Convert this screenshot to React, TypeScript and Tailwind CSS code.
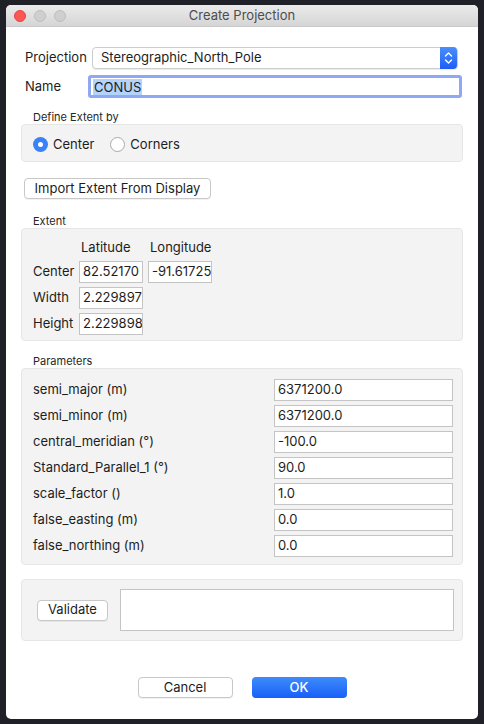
const params = [
  { label: "semi_major (m)", value: "6371200.0" },
  { label: "semi_minor (m)", value: "6371200.0" },
  { label: "central_meridian (°)", value: "-100.0" },
  { label: "Standard_Parallel_1 (°)", value: "90.0" },
  { label: "scale_factor ()", value: "1.0" },
  { label: "false_easting (m)", value: "0.0" },
  { label: "false_northing (m)", value: "0.0" },
];

function Field({ value, className = "" }: { value: string; className?: string }) {
  return (
    <div className={`flex h-[22px] items-center overflow-hidden whitespace-nowrap border border-[#c4c4c4] bg-white pl-[3px] text-[13px] text-[#1d1d1d] ${className}`}>
      {value}
    </div>
  );
}

function Button({ children, className = "" }: { children: React.ReactNode; className?: string }) {
  return (
    <div className={`flex h-[21px] items-center justify-center rounded-[4px] border border-[#c8c8c8] bg-white text-[13px] text-[#1d1d1d] shadow-[0_1px_0_rgba(0,0,0,0.05)] ${className}`}>
      {children}
    </div>
  );
}

function GroupLabel({ children }: { children: React.ReactNode }) {
  return <div className="pl-[12px] text-[11px] leading-[14px] text-[#262626]">{children}</div>;
}

export default function App() {
  return (
    <div className="h-[724px] w-[484px] bg-[#1f2028] pt-[5px] pl-[6px]" style={{ fontFamily: "Inter, 'Liberation Sans', sans-serif" }}>
      <div className="flex h-[714px] w-[472px] flex-col overflow-hidden rounded-[5px] bg-white">
        {/* title bar */}
        <div className="relative flex h-[22px] items-center justify-center border-b border-[#c9c9c9] bg-gradient-to-b from-[#ebebeb] to-[#d5d5d5]">
          <div className="absolute left-[8px] top-[5px] flex gap-[8px]">
            <span className="h-[12px] w-[12px] rounded-full bg-[#fc5753] border border-[#df4744]" />
            <span className="h-[12px] w-[12px] rounded-full bg-[#cfcfcf] border border-[#bdbdbd]" />
            <span className="h-[12px] w-[12px] rounded-full bg-[#cfcfcf] border border-[#bdbdbd]" />
          </div>
          <span className="text-[13px] text-[#4d4d4d]">Create Projection</span>
        </div>

        <div className="flex flex-col px-[15px] pt-[19px]">
          {/* projection */}
          <div className="flex h-[23px] items-center">
            <span className="w-[71px] pl-[4px] text-[13px] text-[#1d1d1d]">Projection</span>
            <div className="flex h-[22px] w-[366px] items-center rounded-[4px] border border-[#cdcdcd] bg-white shadow-[0_1px_1px_rgba(0,0,0,0.08)]">
              <span className="flex-1 pl-[8px] text-[13px] text-[#1d1d1d]">Stereographic_North_Pole</span>
              <div className="flex h-[22px] w-[17px] flex-col items-center justify-center rounded-r-[4px] bg-gradient-to-b from-[#4a8ffa] to-[#1f5cf5]">
                <svg width="9" height="14" viewBox="0 0 9 14" fill="none" stroke="white" strokeWidth="1.4" strokeLinecap="round" strokeLinejoin="round">
                  <path d="M1.5 5 L4.5 2 L7.5 5" />
                  <path d="M1.5 9 L4.5 12 L7.5 9" />
                </svg>
              </div>
            </div>
          </div>

          {/* name */}
          <div className="mt-[6px] flex h-[23px] items-center">
            <span className="w-[67px] pl-[4px] text-[13px] text-[#1d1d1d]">Name</span>
            <div className="flex h-[23px] w-[374px] items-center rounded-[3px] border-[3px] border-[#8fa8f5] bg-white">
              <span className="ml-[2px] bg-[#b3d3fd] px-[1px] text-[13px] leading-[16px] text-[#1d1d1d]">CONUS</span>
            </div>
          </div>

          {/* define extent */}
          <div className="mt-[12px]">
            <GroupLabel>Define Extent by</GroupLabel>
            <div className="flex h-[38px] items-center gap-[6px] rounded-[4px] border border-[#e6e6e6] bg-[#f3f3f3] pl-[11px] pt-[3px]">
              <div className="flex items-center gap-[5px]">
                <span className="flex h-[15px] w-[15px] items-center justify-center rounded-full bg-[#3a82f7]">
                  <span className="h-[5px] w-[5px] rounded-full bg-white" />
                </span>
                <span className="text-[13px] text-[#1d1d1d]">Center</span>
              </div>
              <div className="ml-[10px] flex items-center gap-[5px]">
                <span className="h-[15px] w-[15px] rounded-full border border-[#a9a9a9] bg-white" />
                <span className="text-[13px] text-[#1d1d1d]">Corners</span>
              </div>
            </div>
          </div>

          <Button className="mt-[16px] w-[187px] ml-[3px]">Import Extent From Display</Button>

          {/* extent */}
          <div className="mt-[15px]">
            <GroupLabel>Extent</GroupLabel>
            <div className="h-[113px] rounded-[4px] border border-[#e6e6e6] bg-[#f3f3f3] pl-[11px] pt-[10px]">
              <div className="flex h-[17px] items-center text-[13px] text-[#1d1d1d]">
                <span className="ml-[48px] w-[69px]">Latitude</span>
                <span>Longitude</span>
              </div>
              <div className="mt-[5px] flex flex-col gap-[4px]">
                {[
                  ["Center", "82.52170", "-91.61725"],
                  ["Width", "2.229897", ""],
                  ["Height", "2.229898", ""],
                ].map(([label, lat, lon]) => (
                  <div key={label} className="flex items-center">
                    <span className="w-[46px] text-[13px] text-[#1d1d1d]">{label}</span>
                    <Field value={lat} className="w-[64px]" />
                    {lon && <Field value={lon} className="ml-[5px] w-[64px]" />}
                  </div>
                ))}
              </div>
            </div>
          </div>

          {/* parameters */}
          <div className="mt-[13px]">
            <GroupLabel>Parameters</GroupLabel>
            <div className="flex h-[197px] flex-col gap-[6px] rounded-[4px] border border-[#e6e6e6] bg-[#f3f3f3] pl-[11px] pt-[11px]">
              {params.map((p) => (
                <div key={p.label} className="flex h-[20px] items-center">
                  <span className="w-[241px] text-[13px] text-[#1d1d1d]">{p.label}</span>
                  <Field value={p.value} className="h-[20px] w-[179px]" />
                </div>
              ))}
            </div>
          </div>

          {/* validate */}
          <div className="mt-[14px] flex h-[62px] items-center rounded-[4px] border border-[#e6e6e6] bg-[#f3f3f3] pl-[15px]">
            <Button className="h-[20px] w-[71px]">Validate</Button>
            <div className="ml-[12px] h-[42px] w-[334px] border border-[#c4c4c4] bg-white" />
          </div>

          {/* footer */}
          <div className="mt-[36px] flex justify-center gap-[19px]">
            <Button className="w-[95px]">Cancel</Button>
            <div className="flex h-[21px] w-[95px] items-center justify-center rounded-[4px] bg-gradient-to-b from-[#3f8bfb] to-[#1a5ef8] text-[13px] font-medium text-white">
              OK
            </div>
          </div>
        </div>
      </div>
    </div>
  );
}
